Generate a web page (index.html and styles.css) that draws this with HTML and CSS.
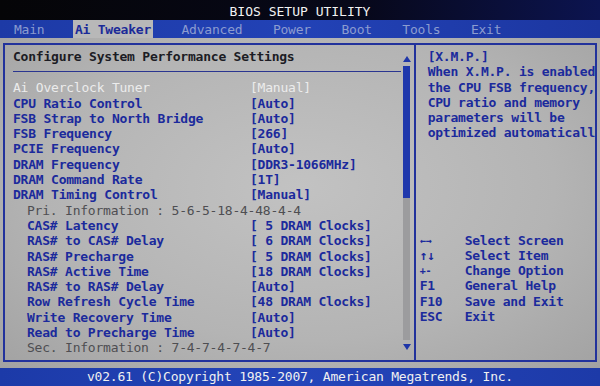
FILE: index.html
```html
<!DOCTYPE html>
<html lang="en">
<head>
    <meta charset="UTF-8">
    <title>BIOS Setup Utility</title>
    <link rel="stylesheet" href="styles.css">
</head>
<body>
    <div class="screen">
        <header class="title-bar">BIOS SETUP UTILITY</header>

        <nav class="menu-bar">
            <span class="tab">Main</span>
            <span class="tab active">Ai Tweaker</span>
            <span class="tab">Advanced</span>
            <span class="tab">Power</span>
            <span class="tab">Boot</span>
            <span class="tab">Tools</span>
            <span class="tab">Exit</span>
        </nav>

        <main class="frame">
            <section class="settings">
                <div class="settings-body">
                    <h1 class="heading">Configure System Performance Settings</h1>
                    <hr class="rule">
                    <ul class="rows">
                        <li class="row selected"><span class="label">Ai Overclock Tuner</span><span>[Manual]</span></li>
                        <li class="row"><span class="label">CPU Ratio Control</span><span>[Auto]</span></li>
                        <li class="row"><span class="label">FSB Strap to North Bridge</span><span>[Auto]</span></li>
                        <li class="row"><span class="label">FSB Frequency</span><span>[266]</span></li>
                        <li class="row"><span class="label">PCIE Frequency</span><span>[Auto]</span></li>
                        <li class="row"><span class="label">DRAM Frequency</span><span>[DDR3-1066MHz]</span></li>
                        <li class="row"><span class="label">DRAM Command Rate</span><span>[1T]</span></li>
                        <li class="row"><span class="label">DRAM Timing Control</span><span>[Manual]</span></li>
                        <li class="row info">Pri. Information : 5-6-5-18-4-48-4-4</li>
                        <li class="row sub"><span class="label">CAS# Latency</span><span>[ 5 DRAM Clocks]</span></li>
                        <li class="row sub"><span class="label">RAS# to CAS# Delay</span><span>[ 6 DRAM Clocks]</span></li>
                        <li class="row sub"><span class="label">RAS# Precharge</span><span>[ 5 DRAM Clocks]</span></li>
                        <li class="row sub"><span class="label">RAS# Active Time</span><span>[18 DRAM Clocks]</span></li>
                        <li class="row sub"><span class="label">RAS# to RAS# Delay</span><span>[Auto]</span></li>
                        <li class="row sub"><span class="label">Row Refresh Cycle Time</span><span>[48 DRAM Clocks]</span></li>
                        <li class="row sub"><span class="label">Write Recovery Time</span><span>[Auto]</span></li>
                        <li class="row sub"><span class="label">Read to Precharge Time</span><span>[Auto]</span></li>
                        <li class="row info">Sec. Information : 7-4-7-4-7-4-7</li>
                    </ul>
                </div>
                <div class="scrollbar">
                    <svg class="arrow" width="8" height="6" viewBox="0 0 8 6"><polygon points="4,0 8,6 0,6" fill="#1f36a8"/></svg>
                    <div class="track"><div class="thumb"></div></div>
                    <svg class="arrow" width="8" height="6" viewBox="0 0 8 6"><polygon points="0,0 8,0 4,6" fill="#1f36a8"/></svg>
                </div>
            </section>

            <aside class="help">
                <div class="help-text">
                    <p>[X.M.P.]</p>
                    <p>When X.M.P. is enabled</p>
                    <p>the CPU FSB frequency,</p>
                    <p>CPU ratio and memory</p>
                    <p>parameters will be</p>
                    <p>optimized automaticall</p>
                </div>
                <dl class="keys">
                    <dt class="small">←→</dt><dd>Select Screen</dd>
                    <dt>↑↓</dt><dd>Select Item</dd>
                    <dt class="small">+-</dt><dd>Change Option</dd>
                    <dt>F1</dt><dd>General Help</dd>
                    <dt>F10</dt><dd>Save and Exit</dd>
                    <dt>ESC</dt><dd>Exit</dd>
                </dl>
            </aside>
        </main>

        <footer class="status-bar">v02.61 (C)Copyright 1985-2007, American Megatrends, Inc.</footer>
    </div>
</body>
</html>
```

FILE: styles.css
```css
/* --- BASE --- */
html, body {
    margin: 0;
    padding: 0;
    background-color: #000;
}

.screen {
    width: 600px;
    height: 386px;
    display: flex;
    flex-direction: column;
    font-family: 'DejaVu Sans Mono', 'Liberation Mono', monospace;
    font-size: 13px;
    letter-spacing: -0.22px;
    line-height: 15.3px;
    overflow: hidden;
}

/* --- TITLE + MENU --- */
.title-bar {
    height: 20px;
    line-height: 24px;
    text-align: center;
    color: #f2f2f2;
    background: linear-gradient(90deg, #050507 0%, #07081a 60%, #0c1450 100%);
    letter-spacing: 0;
}

.menu-bar {
    height: 18px;
    display: flex;
    align-items: stretch;
    gap: 26.5px;
    padding-left: 12px;
    background: linear-gradient(90deg, #1d3aa6, #2242b6 50%, #1c36a0);
    color: #8c9cd0;
}

.tab {
    padding: 0 2px;
    line-height: 19px;
}

.tab.active {
    background-color: #b8b8b8;
    color: #1b2a98;
    font-weight: bold;
}

/* --- FRAME --- */
.frame {
    flex: 1;
    display: flex;
    padding: 5px 3px 6px 3px;
    background: radial-gradient(ellipse at 50% 45%, #c2c2c2 0%, #b4b4b4 60%, #a2a2a2 100%);
    color: #1b2a9c;
    font-weight: bold;
}

.settings {
    width: 409px;
    display: flex;
    border: 2px solid #22329c;
}

.settings-body {
    flex: 1;
    padding: 4px 0 0 8px;
}

.heading {
    margin: 0;
    font-size: 13px;
    color: #1c1c24;
}

.rule {
    margin: 7px 2px 8px 0;
    border: 0;
    border-top: 1px solid #2a3590;
}

.rows {
    list-style: none;
    margin: 0;
    padding: 0;
}

.row {
    display: flex;
    height: 15.3px;
    white-space: pre;
}

.row .label {
    width: 237px;
}

.row.sub .label {
    width: 223px;
}

.row.sub, .row.info {
    padding-left: 14px;
}

.row.selected {
    color: #ececec;
    font-weight: normal;
}

.row.info {
    color: #4e4e52;
    font-weight: normal;
}

/* --- SCROLLBAR --- */
.scrollbar {
    width: 8px;
    margin-right: 3px;
    display: flex;
    flex-direction: column;
    align-items: center;
    padding: 11px 0 10px;
    gap: 4px;
}

.track {
    flex: 1;
    width: 7px;
    background-color: #9c9c9e;
}

.thumb {
    height: 132px;
    background-color: #1f38ac;
}

/* --- HELP PANEL --- */
.help {
    flex: 1;
    border: 2px solid #22329c;
    border-left: 0;
    padding: 4px 0 0 4px;
}

.help-text {
    padding-left: 8px;
}

.help-text p {
    margin: 0;
    white-space: pre;
}

.keys {
    margin: 91.8px 0 0;
    display: grid;
    grid-template-columns: 45px 1fr;
}

.keys dt, .keys dd {
    margin: 0;
    height: 15.3px;
}

.keys dt.small {
    font-size: 10px;
}

/* --- STATUS BAR --- */
.status-bar {
    height: 18px;
    line-height: 17px;
    text-align: center;
    color: #f0f0f0;
    background: linear-gradient(90deg, #1c3aa8, #2445ba 50%, #1d3aa8);
}
```
